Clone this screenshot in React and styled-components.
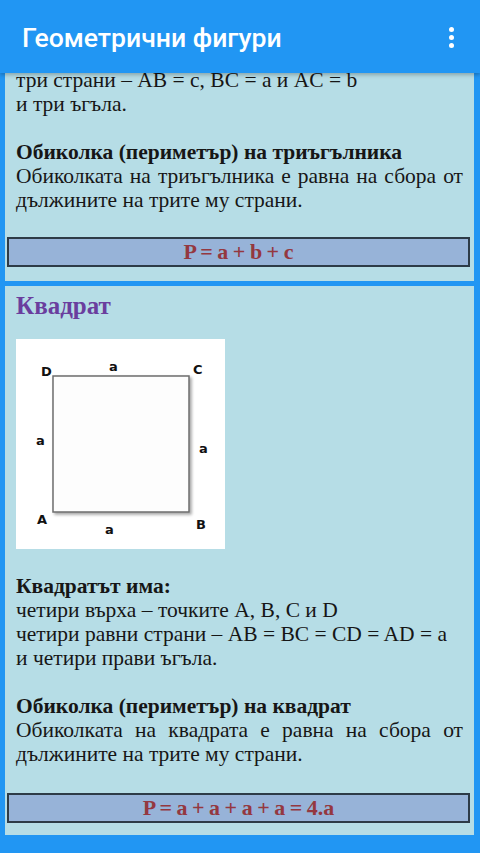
import React from "react";
import styled, { createGlobalStyle } from "styled-components";

const GlobalStyle = createGlobalStyle`
  html, body {
    margin: 0;
    padding: 0;
    background: #2196f3;
  }
  * { box-sizing: border-box; }
`;

const Screen = styled.div`
  width: 480px;
  height: 853px;
  display: flex;
  flex-direction: column;
  background: #2196f3;
  overflow: hidden;
`;

const AppBar = styled.header`
  height: 73px;
  flex-shrink: 0;
  display: flex;
  align-items: center;
  justify-content: space-between;
  padding: 2px 18px 0 22px;
  background: #2196f3;
  box-shadow: 0 2px 4px rgba(0, 0, 0, 0.25);
  position: relative;
  z-index: 2;
`;

const Title = styled.h1`
  margin: 0;
  font-family: Roboto, "Noto Sans", sans-serif;
  font-weight: 500;
  font-size: 26.6px;
  color: #fff;
`;

const MenuButton = styled.div`
  display: flex;
  flex-direction: column;
  gap: 3px;
  padding: 6px 8px;
`;

const Dot = styled.span`
  width: 5px;
  height: 5px;
  border-radius: 50%;
  background: #fff;
`;

const Viewport = styled.main`
  flex: 1;
  overflow: hidden;
`;

/* the list is scrolled a little: the top of the first card sits under the bar */
const Scroller = styled.div`
  margin-top: ${(p) => p.offset}px;
  display: flex;
  flex-direction: column;
  gap: 5px;
  padding: 0 6px 0 5px;
`;

const Card = styled.section`
  background: #b6dde6;
  padding: ${(p) => p.pad};
  font-family: "Liberation Serif", "DejaVu Serif", serif;
  font-size: 21.5px;
  line-height: 24px;
  color: #161616;
`;

const Text = styled.div`
  padding: 0 11px 0 11px;
  text-align: ${(p) => (p.justify ? "justify" : "left")};
  text-align-last: left;
  font-weight: ${(p) => (p.bold ? 700 : 400)};
  min-height: 24px;
`;

const Heading = styled.div`
  padding: 0 11px;
  font-weight: 700;
  font-size: 25px;
  color: #6a3e9e;
`;

const Formula = styled.div`
  margin: ${(p) => p.mt}px 0 0 2px;
  height: 30px;
  width: 463px;
  border: 2px solid #2d3b47;
  background: #97b3d8;
  display: flex;
  align-items: center;
  justify-content: center;
  font-weight: 700;
  font-size: 22px;
  word-spacing: -1px;
  color: #943840;
`;

const Figure = styled.div`
  margin: 21px 0 0 11px;
  width: 209px;
  height: 210px;
  background: #fff;
  display: flex;
`;

const Spacer = styled.div`
  height: ${(p) => p.h}px;
`;

function SquareDrawing() {
  const label = {
    fontFamily: "'DejaVu Sans', sans-serif",
    fontWeight: 700,
    fontSize: 13,
    fill: "#111",
  };
  return (
    <svg width="209" height="210" viewBox="0 0 209 210">
      <defs>
        <filter id="sh" x="-10%" y="-10%" width="130%" height="130%">
          <feDropShadow dx="2" dy="2" stdDeviation="1.5" floodColor="#000" floodOpacity="0.35" />
        </filter>
      </defs>
      <rect x="37" y="37" width="136" height="136" fill="#fdfdfd" stroke="#6d6d6d" strokeWidth="1.5" filter="url(#sh)" />
      <text x="25" y="37" style={label}>D</text>
      <text x="93" y="32" style={label}>a</text>
      <text x="177" y="35" style={label}>C</text>
      <text x="20" y="106" style={label}>a</text>
      <text x="183" y="114" style={label}>a</text>
      <text x="21" y="185" style={label}>A</text>
      <text x="89" y="195" style={label}>a</text>
      <text x="180" y="190" style={label}>B</text>
    </svg>
  );
}

export default function App() {
  return (
    <>
      <GlobalStyle />
      <Screen>
        <AppBar>
          <Title>Геометрични фигури</Title>
          <MenuButton>
            <Dot />
            <Dot />
            <Dot />
          </MenuButton>
        </AppBar>
        <Viewport>
          <Scroller offset={-13}>
            <Card pad="8px 0 14px">
              <Text>три страни – AB = c, BC = a и AC = b</Text>
              <Text>и три ъгъла.</Text>
              <Text />
              <Text bold>Обиколка (периметър) на триъгълника</Text>
              <Text justify>
                Обиколката на триъгълника е равна на сбора от дължините на трите му страни.
              </Text>
              <Formula mt={25}>P = a + b + c</Formula>
            </Card>
            <Card pad="8px 0 12px">
              <Heading>Квадрат</Heading>
              <Figure>
                <SquareDrawing />
              </Figure>
              <Spacer h={25} />
              <Text bold>Квадратът има:</Text>
              <Text>четири върха – точките A, B, C и D</Text>
              <Text>четири равни страни – AB = BC = CD = AD = a</Text>
              <Text>и четири прави ъгъла.</Text>
              <Text />
              <Text bold>Обиколка (периметър) на квадрат</Text>
              <Text justify>
                Обиколката на квадрата е равна на сбора от дължините на трите му страни.
              </Text>
              <Formula mt={27}>P = a + a + a + a = 4.a</Formula>
            </Card>
          </Scroller>
        </Viewport>
      </Screen>
    </>
  );
}
